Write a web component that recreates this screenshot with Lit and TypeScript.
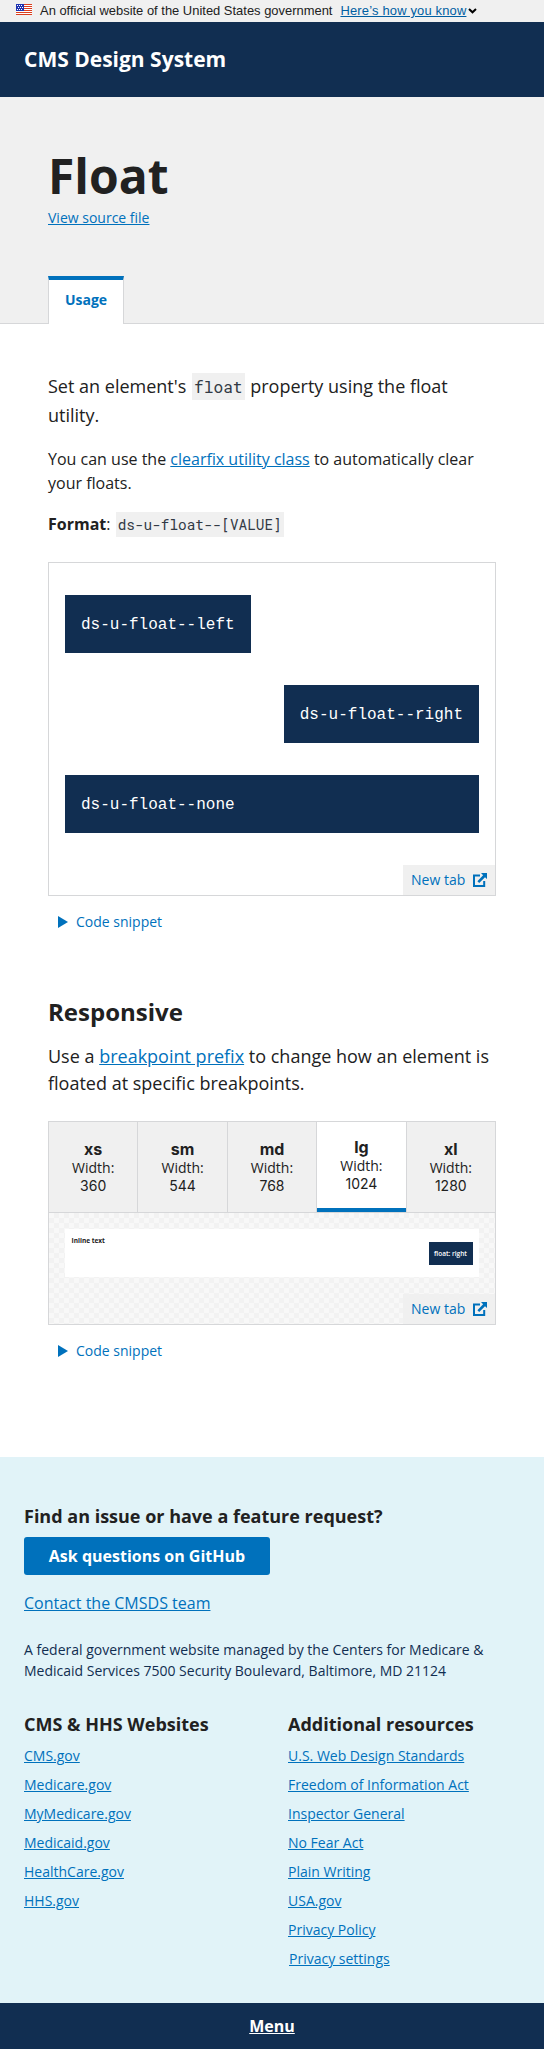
import { LitElement, html, css, svg } from "lit";
import { customElement } from "lit/decorators.js";

const link = (t: string) => html`<a class="link">${t}</a>`;
const external = html`<svg class="ext" width="14" height="14" viewBox="0 0 14 14">
  <path d="M7 2.6H1V13H11.2V8" fill="none" stroke="currentColor" stroke-width="2" />
  <path d="M8 0H14V6L12 4.2L6.2 10L4.4 8.2L10.1 2.2Z" fill="currentColor" />
</svg>`;
const newTab = html`<a class="newtab"><span>New tab</span>${external}</a>`;
const snippet = html`<div class="snippet"><svg width="10" height="12" viewBox="0 0 10 12"><path d="M0 0L10 6L0 12Z" fill="currentColor" /></svg><span>Code snippet</span></div>`;

const sizes = [["xs", "360"], ["sm", "544"], ["md", "768"], ["lg", "1024"], ["xl", "1280"]];
const sites = ["CMS.gov", "Medicare.gov", "MyMedicare.gov", "Medicaid.gov", "HealthCare.gov", "HHS.gov"];
const resources = ["U.S. Web Design Standards", "Freedom of Information Act", "Inspector General", "No Fear Act", "Plain Writing", "USA.gov", "Privacy Policy"];

@customElement("app-root")
export class AppRoot extends LitElement {
  static styles = css`
    :host { display: block; width: 544px; height: 2049px; overflow: hidden; background: #fff; color: #212121; font: 16px/24px "Open Sans", sans-serif; }
    * { box-sizing: border-box; }
    h1, h2, h3, p, ul { margin: 0; padding: 0; list-style: none; }
    .link { color: #0071bc; text-decoration: underline; }
    .banner { height: 22px; background: #f0f0f0; display: flex; align-items: center; padding-left: 16px; font: 12.95px/22px "Liberation Sans", sans-serif; color: #212121; white-space: nowrap; }
    .flag { margin-right: 8px; margin-top: -3px; }
    .banner .link { margin-left: 8px; color: #005ea2; letter-spacing: 0.17px; }
    .chev { margin-left: 2px; }
    .top { height: 75px; background: #112e51; color: #fff; padding: 22px 24px 0; font-size: 21px; line-height: 30px; font-weight: 700; }
    .hero { height: 227px; background: #f0f0f0; border-bottom: 1px solid #d6d7d9; padding: 48px 48px 0; display: flex; flex-direction: column; align-items: flex-start; }
    h1 { font-size: 48px; line-height: 62px; font-weight: 700; }
    .hero .link { font-size: 14px; line-height: 21px; }
    .tab { margin-top: 48px; width: 76px; height: 48px; flex: none; background: #fff; border: 1px solid #d6d7d9; border-top: 4px solid #0071bc; border-bottom: 0; color: #0071bc; font-size: 14px; line-height: 40px; font-weight: 700; text-align: center; }
    main { padding: 48px 48px 0; height: 1133px; }
    .lead { font-size: 18px; line-height: 29px; }
    .second { margin-top: 17px; }
    .format { margin-top: 17px; }
    .example { margin-top: 26px; }
    .toggle { margin-top: 15px; }
    .tight { margin-top: 15px; line-height: 27px; }
    .resizable { margin-top: 24px; }
    code { font: 14.4px/20px "Roboto Mono", "Liberation Mono", monospace; background: #f0f0f0; color: #323a45; padding: 3px 2px; margin: 0 1px; }
    .lead code { font-size: 16.2px; }
    .card { border: 1px solid #d6d7d9; display: flex; flex-direction: column; }
    .floats { padding: 32px 16px; display: flex; flex-direction: column; gap: 32px; }
    .box { height: 58px; padding: 0 16px; background: #112e51; color: #fff; font: 16px/60px "Courier", "Courier New", "Liberation Mono", monospace; }
    .left { align-self: flex-start; }
    .right { align-self: flex-end; }
    .newtab { align-self: flex-end; width: 92px; height: 30px; padding: 0 8px; display: flex; align-items: center; justify-content: space-between; background: #f0f0f0; color: #0071bc; font-size: 14px; }
    .snippet { display: flex; align-items: center; gap: 8px; padding-left: 10px; height: 21px; color: #0071bc; font-size: 14px; line-height: 21px; }
    h2 { margin-top: 64px; font-size: 24px; line-height: 32px; font-weight: 700; }
    .sizes { display: grid; grid-template-columns: repeat(5, 1fr); height: 90px; border-bottom: 1px solid #d6d7d9; gap: 1px; background: #d6d7d9; box-sizing: content-box; }
    .size { background: #f0f0f0; display: flex; flex-direction: column; align-items: center; justify-content: center; font: 14px/18px "Open Sans", sans-serif; }
    .size b, .size .num { font-family: "Inter", sans-serif; }
    .size b { font-size: 16px; line-height: 20px; }
    .size.on { background: #fff; border-bottom: 4px solid #0071bc; }
    .preview { padding: 16px 0 0; display: flex; flex-direction: column; height: 111px; background: conic-gradient(#f2f2f2 25%, #f8f8f8 0 50%, #f2f2f2 0 75%, #f8f8f8 0) 0 0 / 10px 10px; }
    .frame { margin: 0 16px 17px; flex: none; height: 48px; background: #fff; display: flex; justify-content: space-between; padding: 6px 6.5px; font-size: 6.5px; line-height: 11px; font-weight: 700; }
    .fr { margin-top: 7px; width: 44px; height: 23px; background: #112e51; color: #fff; line-height: 23px; text-align: center; font-weight: 600; }
    footer { height: 546px; background: #e1f3f8; padding: 47px 24px 0; }
    h3 { font-size: 18px; line-height: 24px; font-weight: 700; }
    .btn { margin-top: 9px; width: 246px; height: 38px; border-radius: 3px; background: #0071bc; color: #fff; font-weight: 700; line-height: 38px; text-align: center; }
    .contact { margin-top: 16px; }
    .fed { margin-top: 24px; font-size: 14px; line-height: 21px; color: #112e51; }
    .cols { margin-top: 31px; display: grid; grid-template-columns: 264px 1fr; }
    .cols ul { margin-top: 9px; font-size: 14px; line-height: 21px; display: flex; flex-direction: column; gap: 8px; }
    .cols .settings { padding-left: 1px; }
    .menu { height: 46px; background: #112e51; color: #fff; font-weight: 700; text-decoration: underline; line-height: 46px; text-align: center; }
  `;

  render() {
    return html`
      <div class="banner">
        <svg class="flag" width="16" height="11" viewBox="0 0 16 11" shape-rendering="crispEdges">
          <rect width="16" height="11" fill="#fff" />
          ${[0, 2, 4, 6, 8, 10].map((y) => svg`<rect y=${y} width="16" height="1" fill="#db3e1f" />`)}
          <rect width="8" height="7" fill="#1e33b1" />
          ${[[1, 1], [3, 1], [5, 1], [2, 3], [4, 3], [6, 3], [1, 5], [3, 5], [5, 5]].map(([x, y]) => svg`<rect x=${x} y=${y} width="1" height="1" fill="#fff" />`)}
        </svg>
        <span>An official website of the United States government</span>
        <a class="link">Here’s how you know</a>
        <svg class="chev" width="9" height="6" viewBox="0 0 9 6"><path d="M1 1L4.5 4.3L8 1" fill="none" stroke="#000" stroke-width="2" /></svg>
      </div>
      <header class="top">CMS Design System</header>
      <section class="hero">
        <h1>Float</h1>
        ${link("View source file")}
        <div class="tab">Usage</div>
      </section>
      <main>
        <p class="lead">Set an element's <code>float</code> property using the float utility.</p>
        <p class="second">You can use the ${link("clearfix utility class")} to automatically clear your floats.</p>
        <p class="format"><b>Format</b>: <code>ds-u-float--[VALUE]</code></p>
        <div class="card example">
          <div class="floats">
            <div class="box left">ds-u-float--left</div>
            <div class="box right">ds-u-float--right</div>
            <div class="box">ds-u-float--none</div>
          </div>
          ${newTab}
        </div>
        <div class="toggle">${snippet}</div>
        <h2>Responsive</h2>
        <p class="lead tight">Use a ${link("breakpoint prefix")} to change how an element is floated at specific breakpoints.</p>
        <div class="card resizable">
          <div class="sizes">
            ${sizes.map(([n, w]) => html`<div class="size ${n === "lg" ? "on" : ""}"><b>${n}</b><span>Width:</span><span class="num">${w}</span></div>`)}
          </div>
          <div class="preview">
            <div class="frame"><span>Inline text</span><span class="fr">float: right</span></div>
            ${newTab}
          </div>
        </div>
        <div class="toggle">${snippet}</div>
      </main>
      <footer>
        <h3>Find an issue or have a feature request?</h3>
        <div class="btn">Ask questions on GitHub</div>
        <p class="contact">${link("Contact the CMSDS team")}</p>
        <p class="fed">A federal government website managed by the Centers for Medicare &amp; Medicaid Services 7500 Security Boulevard, Baltimore, MD 21124</p>
        <div class="cols">
          <div><h3>CMS &amp; HHS Websites</h3><ul>${sites.map((s) => html`<li>${link(s)}</li>`)}</ul></div>
          <div><h3>Additional resources</h3><ul>${resources.map((s) => html`<li>${link(s)}</li>`)}<li class="settings">${link("Privacy settings")}</li></ul></div>
        </div>
      </footer>
      <div class="menu">Menu</div>
    `;
  }
}
